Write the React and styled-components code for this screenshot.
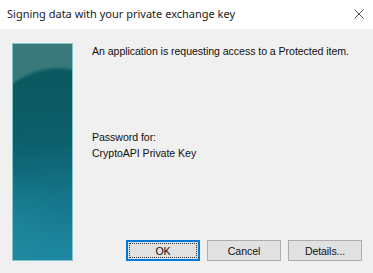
import React from "react";
import styled, { createGlobalStyle } from "styled-components";

const Global = createGlobalStyle`
  html, body {
    margin: 0;
    padding: 0;
    background: #f0f0f0;
  }
`;

const Dialog = styled.div`
  width: 373px;
  height: 273px;
  display: flex;
  flex-direction: column;
  background: #f0f0f0;
  font-family: "Liberation Sans", Arial, sans-serif;
  overflow: hidden;
`;

const TitleBar = styled.div`
  height: 29px;
  flex: none;
  display: flex;
  align-items: center;
  justify-content: space-between;
  background: #fff;
  padding: 0 8px 2px 7px;
  box-sizing: border-box;
`;

const Title = styled.span`
  font-family: "Noto Sans", "Open Sans", sans-serif;
  font-size: 11px;
  color: #1a1a1a;
`;

const Close = styled.svg`
  width: 10px;
  height: 10px;
  margin-right: 1px;
`;

const Body = styled.div`
  flex: 1;
  display: flex;
  padding: 14px 11px 12px 12px;
  gap: 19px;
`;

// 왼쪽 그림 패널
const Banner = styled.div`
  width: 61px;
  flex: none;
  box-sizing: border-box;
  border: 1px solid #86c4cc;
  background:
    radial-gradient(ellipse 103px 150px at 45px 172px, rgba(0, 0, 0, 0) 97%, rgba(130, 172, 162, 0.38) 100%),
    radial-gradient(ellipse 120% 40% at 0% 85%, rgba(40, 150, 160, 0.3), rgba(0, 0, 0, 0) 70%),
    linear-gradient(175deg, #0b5961 0%, #0b5961 20%, #0c5f6c 45%, #147489 70%, #1e89a4 100%);
`;

const Content = styled.div`
  flex: 1;
  display: flex;
  flex-direction: column;
`;

const Text = styled.div`
  font-size: 10.6px;
  letter-spacing: -0.06px;
  line-height: 16px;
  white-space: nowrap;
  color: #111;
  margin-top: ${(p) => p.$top || 0}px;
`;

const Buttons = styled.div`
  margin-top: auto;
  display: flex;
  justify-content: flex-end;
  gap: 7px;
`;

const Button = styled.button`
  width: 74px;
  height: 21px;
  padding: 0;
  box-sizing: border-box;
  background: #e1e1e1;
  border: 1px solid ${(p) => (p.$default ? "#0078d7" : "#adadad")};
  box-shadow: ${(p) => (p.$default ? "inset 0 0 0 1px #0078d7" : "none")};
  font-family: "Liberation Sans", Arial, sans-serif;
  font-size: 10.6px;
  letter-spacing: -0.1px;
  color: #111;
  display: flex;
  align-items: center;
  justify-content: center;
  position: relative;

  &::after {
    content: "";
    display: ${(p) => (p.$default ? "block" : "none")};
    position: absolute;
    inset: 2px;
    border: 1px dotted #333;
  }
`;

export default function App() {
  return (
    <Dialog>
      <Global />
      <TitleBar>
        <Title>Signing data with your private exchange key</Title>
        <Close viewBox="0 0 10 10">
          <path d="M0.5 0.5 L9.5 9.5 M9.5 0.5 L0.5 9.5" stroke="#555" strokeWidth="1" />
        </Close>
      </TitleBar>
      <Body>
        <Banner />
        <Content>
          <Text>An application is requesting access to a Protected item.</Text>
          <Text $top={70}>Password for:</Text>
          <Text>CryptoAPI Private Key</Text>
          <Buttons>
            <Button $default>OK</Button>
            <Button>Cancel</Button>
            <Button>Details...</Button>
          </Buttons>
        </Content>
      </Body>
    </Dialog>
  );
}
